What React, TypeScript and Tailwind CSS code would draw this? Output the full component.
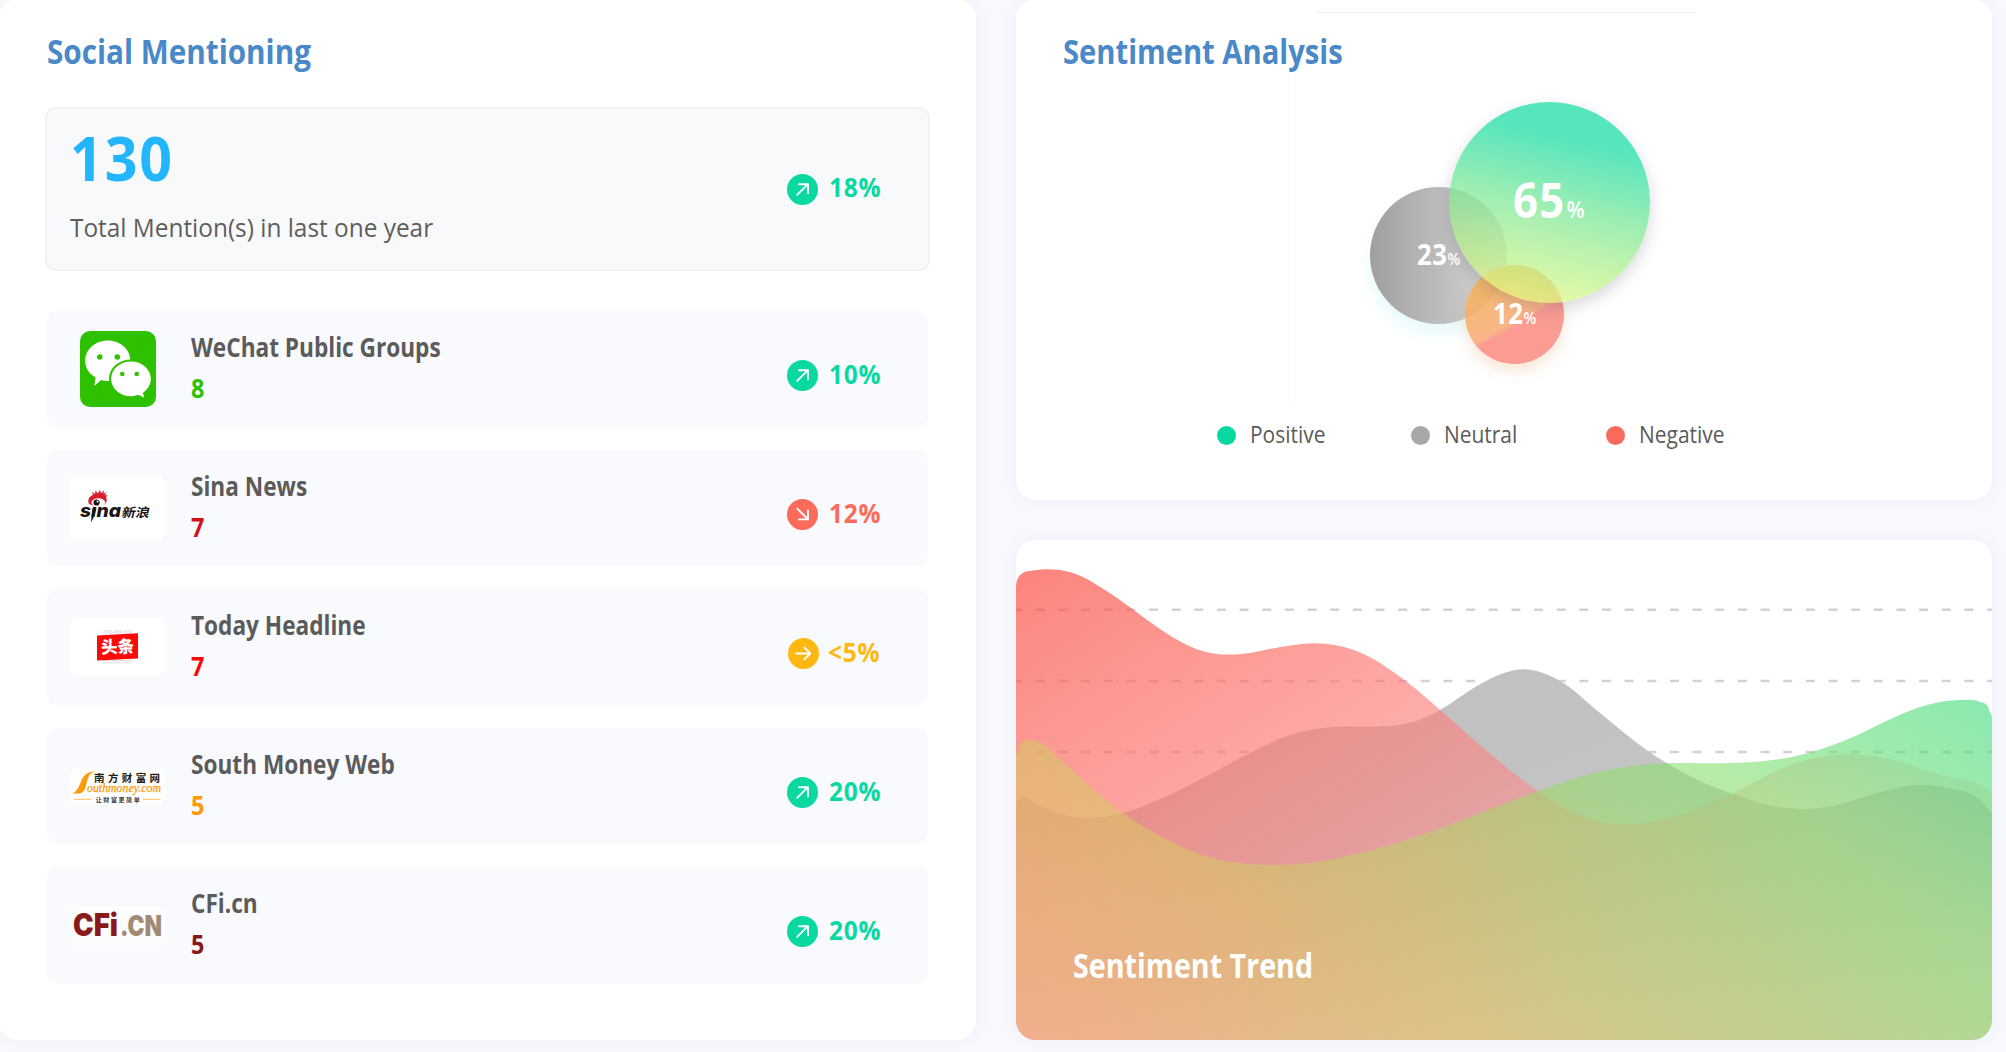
import type { ReactNode } from "react";
import { clsx } from "clsx";

type Trend = "up" | "down" | "flat";

const trendBg = { up: "bg-[#09d8a0]", down: "bg-[#fa6b5c]", flat: "bg-[#fdb812]" };
const trendText = { up: "text-[#09d8a0]", down: "text-[#fa6b5c]", flat: "text-[#fdb812]" };
const trendPath = {
  up: "M10.2 20.8 L20.6 10.4 M12 10.2 H21 V19.3",
  down: "M10.2 9.6 L20.6 20 M12 20.4 H21 V11.4",
  flat: "M8.2 15.5 H22 M16.4 9.6 L22.4 15.5 L16.4 21.4",
};

function Change({ trend, value }: { trend: Trend; value: string }) {
  return (
    <div className={clsx("flex items-center", trend === "flat" ? "w-[140px] gap-[9px]" : "w-[141px] gap-[11px]")}>
      <span className={clsx("h-[31px] w-[31px] rounded-full", trendBg[trend])}>
        <svg viewBox="0 0 31 31" className="h-full w-full" fill="none" stroke="#fff" strokeWidth="1.9" strokeLinecap="round" strokeLinejoin="round">
          <path d={trendPath[trend]} />
        </svg>
      </span>
      <span className={clsx("origin-left scale-x-[0.94] pb-[3px] text-[26px] leading-[31px] font-bold tracking-[0.8px]", trendText[trend])}>{value}</span>
    </div>
  );
}

function WeChatLogo() {
  return (
    <svg viewBox="0 0 76 76" className="h-[76px] w-[76px]">
      <rect width="76" height="76" rx="10" fill="#2dc100" />
      <g fill="#fff">
        <path d="M27.8 9.5c12.5 0 22.6 9 22.6 20.2S40.3 50 27.8 50c-2.300 0-4.600-.3-6.700-.9L14.300 55l1.300-8.500C9.200 42.800 5.200 36.700 5.200 29.700 5.200 18.500 15.300 9.500 27.800 9.500z" />
        <path stroke="#2dc100" strokeWidth="4.400" paintOrder="stroke" d="M51 30.600c11 0 19.800 7.800 19.800 17.300 0 5.600-3.100 10.600-7.900 13.900l1.400 5-5.900-3.100c-2.300.9-4.800 1.500-7.400 1.500-11 0-19.800-7.700-19.800-17.300S40 30.600 51 30.600z" />
      </g>
      <g fill="#2dc100">
        <circle cx="19.800" cy="26" r="2.800" />
        <circle cx="37.300" cy="26" r="2.800" />
        <circle cx="42.300" cy="43" r="2.300" />
        <circle cx="56.700" cy="43" r="2.300" />
      </g>
    </svg>
  );
}

function SinaLogo() {
  return (
    <svg viewBox="0 0 95 66" className="h-[66px] w-[95px] rounded-lg bg-white">
      <text x="10" y="42" textLength="41" lengthAdjust="spacingAndGlyphs" className="text-[18px] font-extrabold italic [font-family:Inter,sans-serif]" fill="#1b1414">sına</text>
      <path d="M22.500 33.500h4l-3.400 10-2.200 4z" fill="#1b1414" />
      <path d="M19 29c-2-5 1-8 4-9l-1-3 3 2 .5-3.500 2.500 3 2-3.800 1 3.500 3-3-.5 3.800 3-2-1.500 3.500 3-.5-2 2c2 4 0 8-5 8.500-4 .8-8 .5-12-1.500z" fill="#d5202c" />
      <ellipse cx="28.300" cy="27.500" rx="6.800" ry="4.200" fill="#fff" />
      <circle cx="26.600" cy="27.500" r="3.100" fill="#1b1414" />
      <circle cx="27.600" cy="26.500" r="1" fill="#fff" />
      <text x="0" y="0" transform="translate(51 41.500) skewX(-12)" textLength="28" lengthAdjust="spacingAndGlyphs" className="text-[12.500px] font-bold [font-family:'Noto_Sans_CJK_SC',sans-serif]" fill="#1b1414">新浪</text>
    </svg>
  );
}

function ToutiaoLogo() {
  return (
    <svg viewBox="0 0 95 58" className="h-[58px] w-[95px] rounded-lg bg-white">
      <path d="M33 13h9M44 13h8.500M54 13h8M33 15h29M33 42.500h20M54 42.500h8M33 44.800h20M54 44.800h8" stroke="#dcdcdc" strokeWidth="1" />
      <path d="M27 17.500L68 15.200V40.500L27 42.600Z" fill="#ff0808" />
      <text x="31" y="35" transform="rotate(-2 47 30)" textLength="33" lengthAdjust="spacingAndGlyphs" className="text-[17px] font-black [font-family:'Noto_Sans_CJK_SC',sans-serif]" fill="#fff">头条</text>
    </svg>
  );
}

function SouthMoneyLogo() {
  return (
    <svg viewBox="0 0 95 37" className="h-[37px] w-[95px] rounded-lg bg-white">
      <path d="M2.200 25.500C8 23 9 18 11 13.500 13.500 7 18 3.400 25.500 3.600 22 4.600 19.500 6 18 10c-2 5.500-1.500 11.500-6 14.500-2.500 1.600-6 .6-9.800 1z" fill="#fc9a08" />
      <text x="24" y="13.500" textLength="66" className="text-[10.500px] font-bold [font-family:'Noto_Sans_CJK_SC',sans-serif]" fill="#1d1d1d">南方财富网</text>
      <text x="17" y="23.500" textLength="74" lengthAdjust="spacingAndGlyphs" className="text-[12.500px] italic [font-family:'Liberation_Serif',serif]" fill="#fc9a08" stroke="#fc9a08" strokeWidth=".25">outhmoney.com</text>
      <path d="M4 31.300H21.700M73 31.300H90.700" stroke="#fdc15f" strokeWidth="1" />
      <text x="25.700" y="33.700" textLength="44" className="text-[6px] font-bold [font-family:'Noto_Sans_CJK_SC',sans-serif]" fill="#3a3a3a">让财富更简单</text>
    </svg>
  );
}

function CfiLogo() {
  return (
    <svg viewBox="0 0 95 39" className="h-[39px] w-[95px] rounded-lg bg-[#fcfcfc] font-black [font-family:Inter,sans-serif]">
      <text x="3" y="30.200" textLength="45" className="text-[31px]" lengthAdjust="spacingAndGlyphs" fill="#8a191c">CFi</text>
      <text x="50" y="30.200" textLength="42" className="text-[28px]" lengthAdjust="spacingAndGlyphs" fill="#a18a75">.CN</text>
    </svg>
  );
}

type Source = { name: string; count: number; color: string; logo: ReactNode; trend: Trend; value: string };

const sources: Source[] = [
  { name: "WeChat Public Groups", count: 8, color: "text-[#2dc100]", logo: <WeChatLogo />, trend: "up", value: "10%" },
  { name: "Sina News", count: 7, color: "text-[#d0121b]", logo: <SinaLogo />, trend: "down", value: "12%" },
  { name: "Today Headline", count: 7, color: "text-[#ff0505]", logo: <ToutiaoLogo />, trend: "flat", value: "<5%" },
  { name: "South Money Web", count: 5, color: "text-[#ff9a00]", logo: <SouthMoneyLogo />, trend: "up", value: "20%" },
  { name: "CFi.cn", count: 5, color: "text-[#8a191c]", logo: <CfiLogo />, trend: "up", value: "20%" },
];

function Card({ className, children }: { className?: string; children: ReactNode }) {
  return <section className={clsx("relative rounded-[20px] bg-white shadow-[0_0_20px_rgba(60,70,130,0.05)]", className)}>{children}</section>;
}

const title = "origin-left text-[34px] leading-10 font-bold whitespace-nowrap";

function SocialMentioning() {
  return (
    <Card className="-ml-0.5 h-[1041px] w-[978px] pt-8 pl-[47px]">
      <h2 className={clsx(title, "ml-0.5 scale-x-[0.873] text-[#4a89c8]")}>Social Mentioning</h2>
      <div className="mt-9 flex h-[164px] w-[885px] items-center justify-between rounded-[11px] border-2 border-[#f1f2f6] bg-[#f8f9fb] pl-[23px]">
        <div className="pb-2">
          <p className="origin-left scale-x-[0.94] text-[61px] leading-[60px] font-bold tracking-[2px] text-[#24b5ff]">130</p>
          <p className="mt-[23px] origin-left scale-x-[0.938] text-[26px] leading-8 whitespace-nowrap text-[#5f5e5c]">Total Mention(s) in last one year</p>
        </div>
        <Change trend="up" value="18%" />
      </div>
      <ul className="mt-10 ml-0.5 flex w-[881px] flex-col gap-[23px]">
        {sources.map((s) => (
          <li key={s.name} className="flex h-[116px] items-center rounded-[10px] bg-[#f9fafe] pl-[23px]">
            <div className="flex w-[95px] justify-center">{s.logo}</div>
            <div className="ml-[26px] flex-1 pb-[2px] text-[26px] leading-[41.500px] font-bold">
              <p className="origin-left scale-x-[0.87] whitespace-nowrap text-[#5b5b5b]">{s.name}</p>
              <p className={clsx("origin-left scale-x-[0.9]", s.color)}>{s.count}</p>
            </div>
            <div className="pt-[13px]">
              <Change trend={s.trend} value={s.value} />
            </div>
          </li>
        ))}
      </ul>
    </Card>
  );
}

function Legend({ color, label }: { color: string; label: string }) {
  return (
    <div className="flex w-[194.300px] items-center gap-[14px]">
      <span className={clsx("h-[19px] w-[19px] rounded-full", color)} />
      <span className="origin-left scale-x-[0.91] pb-0.5 text-[23px] leading-7 text-[#5b5b5b]">{label}</span>
    </div>
  );
}

function SentimentAnalysis() {
  return (
    <Card className="h-[501px] w-[976px]">
      <div className="absolute top-[13px] left-[299px] h-px w-[381px] bg-[#eeeff1]" />
      <div className="absolute top-[40px] left-[273px] h-[368px] w-px bg-[#fafafa]" />
      <h2 className={clsx(title, "relative ml-[47px] scale-x-[0.858] pt-8 text-[#4a89c8]")}>Sentiment Analysis</h2>
      {/* Overlapping share bubbles */}
      <div className="absolute top-[103px] left-[354px] h-[262px] w-[282px] text-white">
        <div className="absolute top-[85px] left-0 h-[137px] w-[137px] rounded-full bg-linear-to-r from-[#9f9f9f] to-[#dadada] shadow-[0_10px_16px_rgba(90,215,225,0.15)]" />
        <div className="absolute top-[163px] left-[95px] h-[99px] w-[99px] rounded-full bg-[linear-gradient(150deg,rgba(248,182,84,0.86)_10%,rgba(249,166,112,0.84)_54%,rgba(250,134,122,0.82)_58%)] shadow-[0_8px_14px_rgba(235,165,95,0.25)]" />
        <div className="absolute top-0 left-[79px] h-[201px] w-[201px] rounded-full bg-[linear-gradient(193deg,rgba(15,218,162,0.7)_22%,rgba(127,232,145,0.7)_55%,rgba(230,249,128,0.7)_93%)] shadow-[0_6px_16px_rgba(60,60,90,0.2)]" />
        <p className="absolute top-[134px] left-[47px] flex origin-left scale-x-[0.92] items-baseline text-[28px] leading-9 font-bold tracking-[0.600px]">
          23<span className="text-[16px] font-semibold">%</span>
        </p>
        <p className="absolute top-[193px] left-[123px] flex origin-left scale-x-[0.92] items-baseline text-[28px] leading-9 font-bold tracking-[0.600px]">
          12<span className="text-[16px] font-semibold">%</span>
        </p>
        <p className="absolute top-[68px] left-[143px] flex origin-left scale-x-[0.91] items-baseline gap-px text-[48px] leading-[60px] font-bold tracking-[1.500px]">
          65<span className="text-[23px] font-semibold">%</span>
        </p>
      </div>
      <div className="mt-[349px] flex pl-[201px]">
        <Legend color="bg-[#09d8a0]" label="Positive" />
        <Legend color="bg-[#a8a8a6]" label="Neutral" />
        <Legend color="bg-[#fa6b5c]" label="Negative" />
      </div>
    </Card>
  );
}

type Point = [number, number];

const negative: Point[] = [[13, 31], [30, 29.3], [57, 33], [94, 53.300], [117, 69.500], [144, 89], [171, 105], [191, 112.200], [211, 114.600], [232, 113.300], [262, 107.500], [299, 103.300], [338, 110], [391, 142], [424, 170], [484, 222], [522, 251], [567, 277], [612, 284.300], [657, 277], [717, 253], [777, 224], [837, 214], [877, 220], [924, 235], [967, 246.500], [976, 252]];
const neutral: Point[] = [[0, 263], [7, 257], [17, 262], [44, 274], [72, 278], [107, 273], [151, 256], [204, 229], [234, 213], [277, 194], [317, 187], [367, 186.300], [397, 182], [424, 170], [461, 146], [484, 134.500], [507, 129.300], [544, 141], [584, 173], [632, 211], [684, 241], [717, 254], [751, 265], [787, 269], [817, 266], [861, 253], [901, 245], [931, 248], [964, 260], [976, 273]];
const positive: Point[] = [[0, 213], [4, 205], [16, 200], [27, 204], [44, 219], [77, 249], [107, 273], [144, 296], [191, 316.500], [224, 323], [257, 325], [301, 322], [344, 313], [411, 293], [484, 265.500], [522, 251], [567, 236], [617, 226], [651, 223.300], [717, 223], [764, 219], [794, 212.500], [837, 197], [877, 178], [911, 165], [944, 160], [964, 162], [972, 167], [976, 177]];

// Cubic Hermite spline through the points, closed down to the chart's base.
function area(points: Point[], lead?: string) {
  const slope = (i: number) => {
    const a = points[i - 1];
    const b = points[i];
    const c = points[i + 1];
    if (!a) return (c[1] - b[1]) / (c[0] - b[0]);
    if (!c) return (b[1] - a[1]) / (b[0] - a[0]);
    const h0 = b[0] - a[0];
    const h1 = c[0] - b[0];
    return (((b[1] - a[1]) / h0) * h1 + ((c[1] - b[1]) / h1) * h0) / (h0 + h1);
  };
  let d = lead ?? `M0 500 L${points[0].join(" ")}`;
  for (let i = 0; i < points.length - 1; i++) {
    const [x1, y1] = points[i];
    const [x2, y2] = points[i + 1];
    const h = (x2 - x1) / 3;
    d += ` C${x1 + h} ${y1 + slope(i) * h} ${x2 - h} ${y2 - slope(i + 1) * h} ${x2} ${y2}`;
  }
  return `${d} V500 H0 Z`;
}

function SentimentTrend() {
  return (
    <Card className="flex h-[500px] w-[976px] overflow-hidden">
      <svg viewBox="0 0 976 500" className="absolute inset-0 h-full w-full">
        <defs>
          <linearGradient id="neg" gradientUnits="userSpaceOnUse" x1="10" y1="35" x2="512" y2="808">
            <stop offset="0" stopColor="#fa463c" stopOpacity=".66" />
            <stop offset=".12" stopColor="#fa5c52" stopOpacity=".66" />
            <stop offset=".33" stopColor="#fc7d78" stopOpacity=".66" />
            <stop offset=".45" stopColor="#fa8686" stopOpacity=".63" />
            <stop offset=".7" stopColor="#fa9a9a" stopOpacity=".3" />
            <stop offset="1" stopColor="#fa9a9a" stopOpacity=".1" />
          </linearGradient>
          <linearGradient id="neu" x1="0" y1="0" x2="1" y2="1">
            <stop offset="0" stopColor="#bebebe" />
            <stop offset=".4" stopColor="#c2c2c2" />
            <stop offset="1" stopColor="#dadada" />
          </linearGradient>
          <linearGradient id="pos" gradientUnits="userSpaceOnUse" x1="950" y1="160" x2="510" y2="836">
            <stop offset="0" stopColor="#3fda7b" stopOpacity=".6" />
            <stop offset=".24" stopColor="#84e06e" stopOpacity=".6" />
            <stop offset=".7" stopColor="#dbc565" stopOpacity=".6" />
            <stop offset="1" stopColor="#f8bb85" stopOpacity=".6" />
          </linearGradient>
        </defs>
        <g stroke="#d2d2d2" strokeWidth="2.600" strokeDasharray="9 13.650">
          <path d="M-2.900 69.700H976" />
          <path d="M-2.900 141H976" />
          <path d="M-2.900 212H976" />
        </g>
        <path d={area(neutral)} fill="url(#neu)" />
        <path d={area(negative, "M0 500 V47 C0 38 5 31.500 13 31")} fill="url(#neg)" />
        <path d={area(positive)} fill="url(#pos)" />
      </svg>
      <h2 className={clsx(title, "relative mt-auto mb-[55px] ml-[57px] scale-x-[0.843] text-white")}>Sentiment Trend</h2>
    </Card>
  );
}

export default function App() {
  return (
    <main className="flex h-[1052px] w-[2006px] gap-10 overflow-hidden bg-[#f8f9fe] [font-family:'Open_Sans',sans-serif]">
      <div className="-mt-px">
        <SocialMentioning />
      </div>
      <div className="-mt-px flex flex-col gap-10">
        <SentimentAnalysis />
        <SentimentTrend />
      </div>
    </main>
  );
}
